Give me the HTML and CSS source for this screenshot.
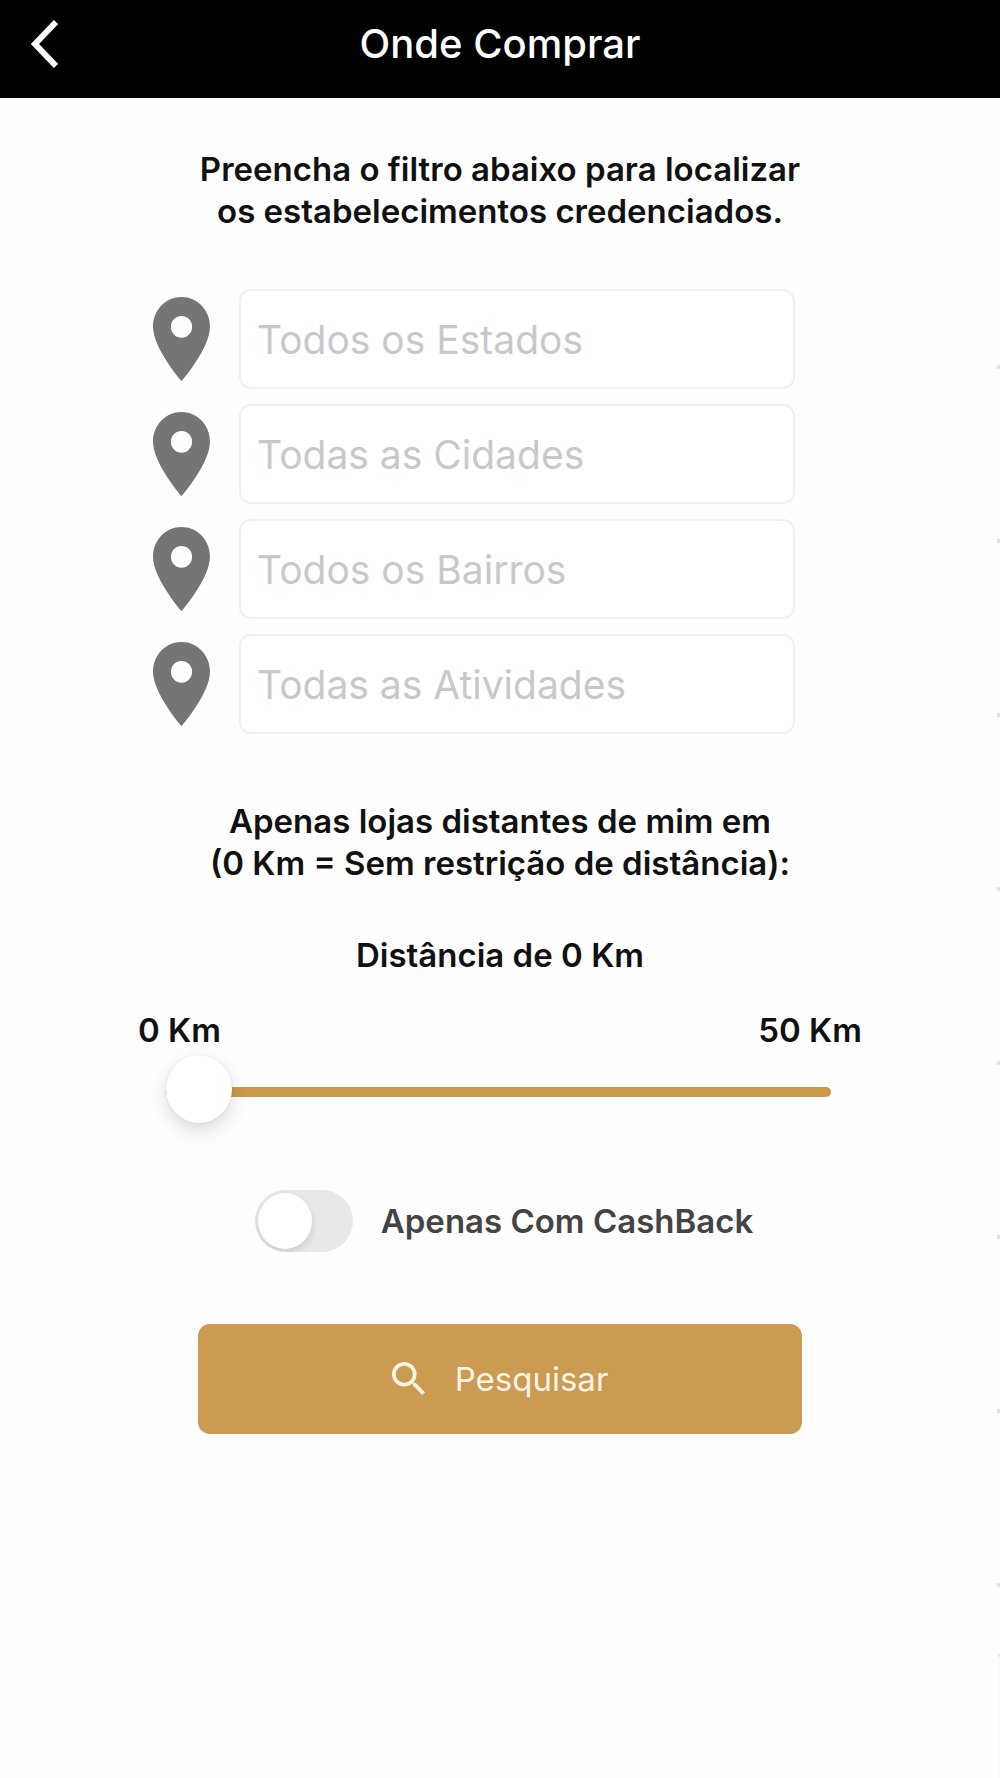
FILE: index.html
```html
<!DOCTYPE html>
<html lang="pt-BR">
<head>
    <meta charset="UTF-8">
    <meta name="viewport" content="width=device-width, initial-scale=1.0">
    <title>Onde Comprar</title>
    <link rel="stylesheet" href="styles.css">
</head>
<body>
    <header class="topbar">
        <button type="button" class="back" aria-label="Voltar">
            <svg viewBox="0 0 28 50" width="28" height="50"><path d="M26 3 L5 25 L26 47" fill="none" stroke="#fff" stroke-width="6"/></svg>
        </button>
        <h1>Onde Comprar</h1>
    </header>
    <main class="page">
        <form class="filter">
            <p class="text">Preencha o filtro abaixo para localizar<br>os estabelecimentos credenciados.</p>

            <div class="fields">
                <div class="field">
                    <label for="estado" aria-label="Estado"><svg class="pin" viewBox="5 2 14 20" preserveAspectRatio="none"><path d="M12 2C8.13 2 5 5.13 5 9c0 5.25 7 13 7 13s7-7.75 7-13c0-3.870-3.130-7-7-7zm0 9.700a2.600 2.600 0 1 1 0-5.200 2.600 2.600 0 0 1 0 5.200z"/></svg></label>
                    <input type="text" id="estado" placeholder="Todos os Estados">
                </div>
                <div class="field">
                    <label for="cidade" aria-label="Cidade"><svg class="pin" viewBox="5 2 14 20" preserveAspectRatio="none"><path d="M12 2C8.13 2 5 5.13 5 9c0 5.25 7 13 7 13s7-7.75 7-13c0-3.870-3.130-7-7-7zm0 9.700a2.600 2.600 0 1 1 0-5.200 2.600 2.600 0 0 1 0 5.200z"/></svg></label>
                    <input type="text" id="cidade" placeholder="Todas as Cidades">
                </div>
                <div class="field">
                    <label for="bairro" aria-label="Bairro"><svg class="pin" viewBox="5 2 14 20" preserveAspectRatio="none"><path d="M12 2C8.13 2 5 5.13 5 9c0 5.25 7 13 7 13s7-7.75 7-13c0-3.870-3.130-7-7-7zm0 9.700a2.600 2.600 0 1 1 0-5.200 2.600 2.600 0 0 1 0 5.200z"/></svg></label>
                    <input type="text" id="bairro" placeholder="Todos os Bairros">
                </div>
                <div class="field">
                    <label for="atividade" aria-label="Atividade"><svg class="pin" viewBox="5 2 14 20" preserveAspectRatio="none"><path d="M12 2C8.13 2 5 5.13 5 9c0 5.25 7 13 7 13s7-7.75 7-13c0-3.870-3.130-7-7-7zm0 9.700a2.600 2.600 0 1 1 0-5.200 2.600 2.600 0 0 1 0 5.200z"/></svg></label>
                    <input type="text" id="atividade" placeholder="Todas as Atividades">
                </div>
            </div>

            <p class="text">Apenas lojas distantes de mim em<br>(0 Km = Sem restrição de distância):</p>

            <div class="distance">
                <label class="text" for="distancia">Distância de <span id="km">0</span> Km</label>
                <div class="limits text">
                    <span>0 Km</span>
                    <span>50 Km</span>
                </div>
                <input type="range" class="slider" id="distancia" min="0" max="50" value="0" oninput="document.getElementById('km').innerText = this.value">
            </div>

            <div class="cashback">
                <input type="checkbox" class="switch" id="cashback">
                <label for="cashback">Apenas Com CashBack</label>
            </div>

            <button type="submit" class="search">
                <svg viewBox="3 3 18 18" width="34" height="34"><path fill="currentColor" d="M15.500 14h-.79l-.28-.27A6.471 6.471 0 0 0 16 9.500 6.500 6.500 0 1 0 9.500 16c1.610 0 3.090-.59 4.230-1.570l.27.28v.79l5 4.990L20.490 19l-4.990-5zm-6 0C7.010 14 5 11.990 5 9.500S7.010 5 9.500 5 14 7.010 14 9.500 11.990 14 9.500 14z"/></svg>
                Pesquisar
            </button>
        </form>
    </main>
</body>
</html>
```
FILE: styles.css
```css
* {
    box-sizing: border-box;
}
body {
    margin: 0;
    min-height: 100vh;
    display: flex;
    flex-direction: column;
    background-color: #fefefe;
    color: #111;
    font-family: Inter, "Liberation Sans", sans-serif;
    font-size: 33px;
    line-height: 42px;
}
.topbar {
    display: grid;
    grid-template-columns: 80px 1fr 80px;
    align-items: center;
    padding-bottom: 10px;
    height: 98px;
    background-color: #000;
    color: #fff;
}
.topbar h1 {
    margin: 0;
    font-size: 40px;
    font-weight: 500;
    text-align: center;
}
.back {
    display: flex;
    margin: 0;
    padding: 0 0 0 30px;
    border: 0;
    background: none;
}
/* row separators of the list behind, seen at the right edge */
.page {
    flex: 1;
    padding: 50px 0;
    background:
        repeating-linear-gradient(#e4e4e4 0 4px, transparent 4px 174px) right 267px / 3px 1226px no-repeat,
        linear-gradient(#e9e9e9 0 3px, #f8fdfc 3px) right 1556px / 2px 100% no-repeat;
}
.filter {
    display: flex;
    flex-direction: column;
    align-items: center;
}
.text {
    margin: 0;
    font-weight: 600;
    text-align: center;
}
.fields {
    display: flex;
    flex-direction: column;
    gap: 15px;
    width: 100%;
    margin: 57px 0 66px;
    padding: 0 20.5% 0 15.3%;
}
.field {
    display: flex;
    align-items: center;
    gap: 29px;
}
.field label {
    display: flex;
}
.pin {
    width: 57px;
    height: 84px;
    fill: #757575;
}
.field input {
    flex: 1;
    min-width: 0;
    height: 100px;
    padding: 0 16px;
    border: 2px solid #f1f1f1;
    border-radius: 12px;
    background-color: #fff;
    font-family: inherit;
    font-size: 39px;
}
.field input::placeholder {
    color: #c8c8ca;
    opacity: 1;
}
.distance {
    display: flex;
    flex-direction: column;
    width: 72.4%;
    margin-top: 50px;
}
.limits {
    display: flex;
    justify-content: space-between;
    margin-top: 33px;
}
.slider {
    -webkit-appearance: none;
    appearance: none;
    height: 66px;
    margin: 8px 31px 0 28px;
    background: none;
}
.slider::-webkit-slider-runnable-track {
    height: 10px;
    border-radius: 5px;
    background-color: #cb994b;
}
.slider::-webkit-slider-thumb {
    -webkit-appearance: none;
    width: 66px;
    height: 68px;
    margin-top: -32px;
    border-radius: 50%;
    background-color: #fff;
    box-shadow: 0 8px 18px rgba(0, 0, 0, 0.14), 0 0 3px rgba(0, 0, 0, 0.08);
}
.cashback {
    display: flex;
    align-items: center;
    gap: 28px;
    margin-top: 65px;
    padding-left: 8px;
    color: #444;
    font-weight: 600;
}
.switch {
    appearance: none;
    display: flex;
    align-items: center;
    width: 98px;
    height: 62px;
    margin: 0;
    padding: 3px;
    border-radius: 31px;
    background-color: #e8e8e8;
    overflow: hidden;
}
.switch::before {
    content: "";
    width: 54px;
    height: 56px;
    border-radius: 50%;
    background-color: #fff;
    box-shadow: 0 4px 8px rgba(0, 0, 0, 0.12);
}
.switch:checked {
    justify-content: flex-end;
    background-color: #cb9b52;
}
.search {
    display: flex;
    align-items: center;
    justify-content: center;
    gap: 29px;
    width: 60.4%;
    height: 110px;
    margin-top: 72px;
    border: 0;
    border-radius: 12px;
    background-color: #cb9b52;
    color: #fcf3e6;
    font-family: inherit;
    font-size: 33px;
}
```
